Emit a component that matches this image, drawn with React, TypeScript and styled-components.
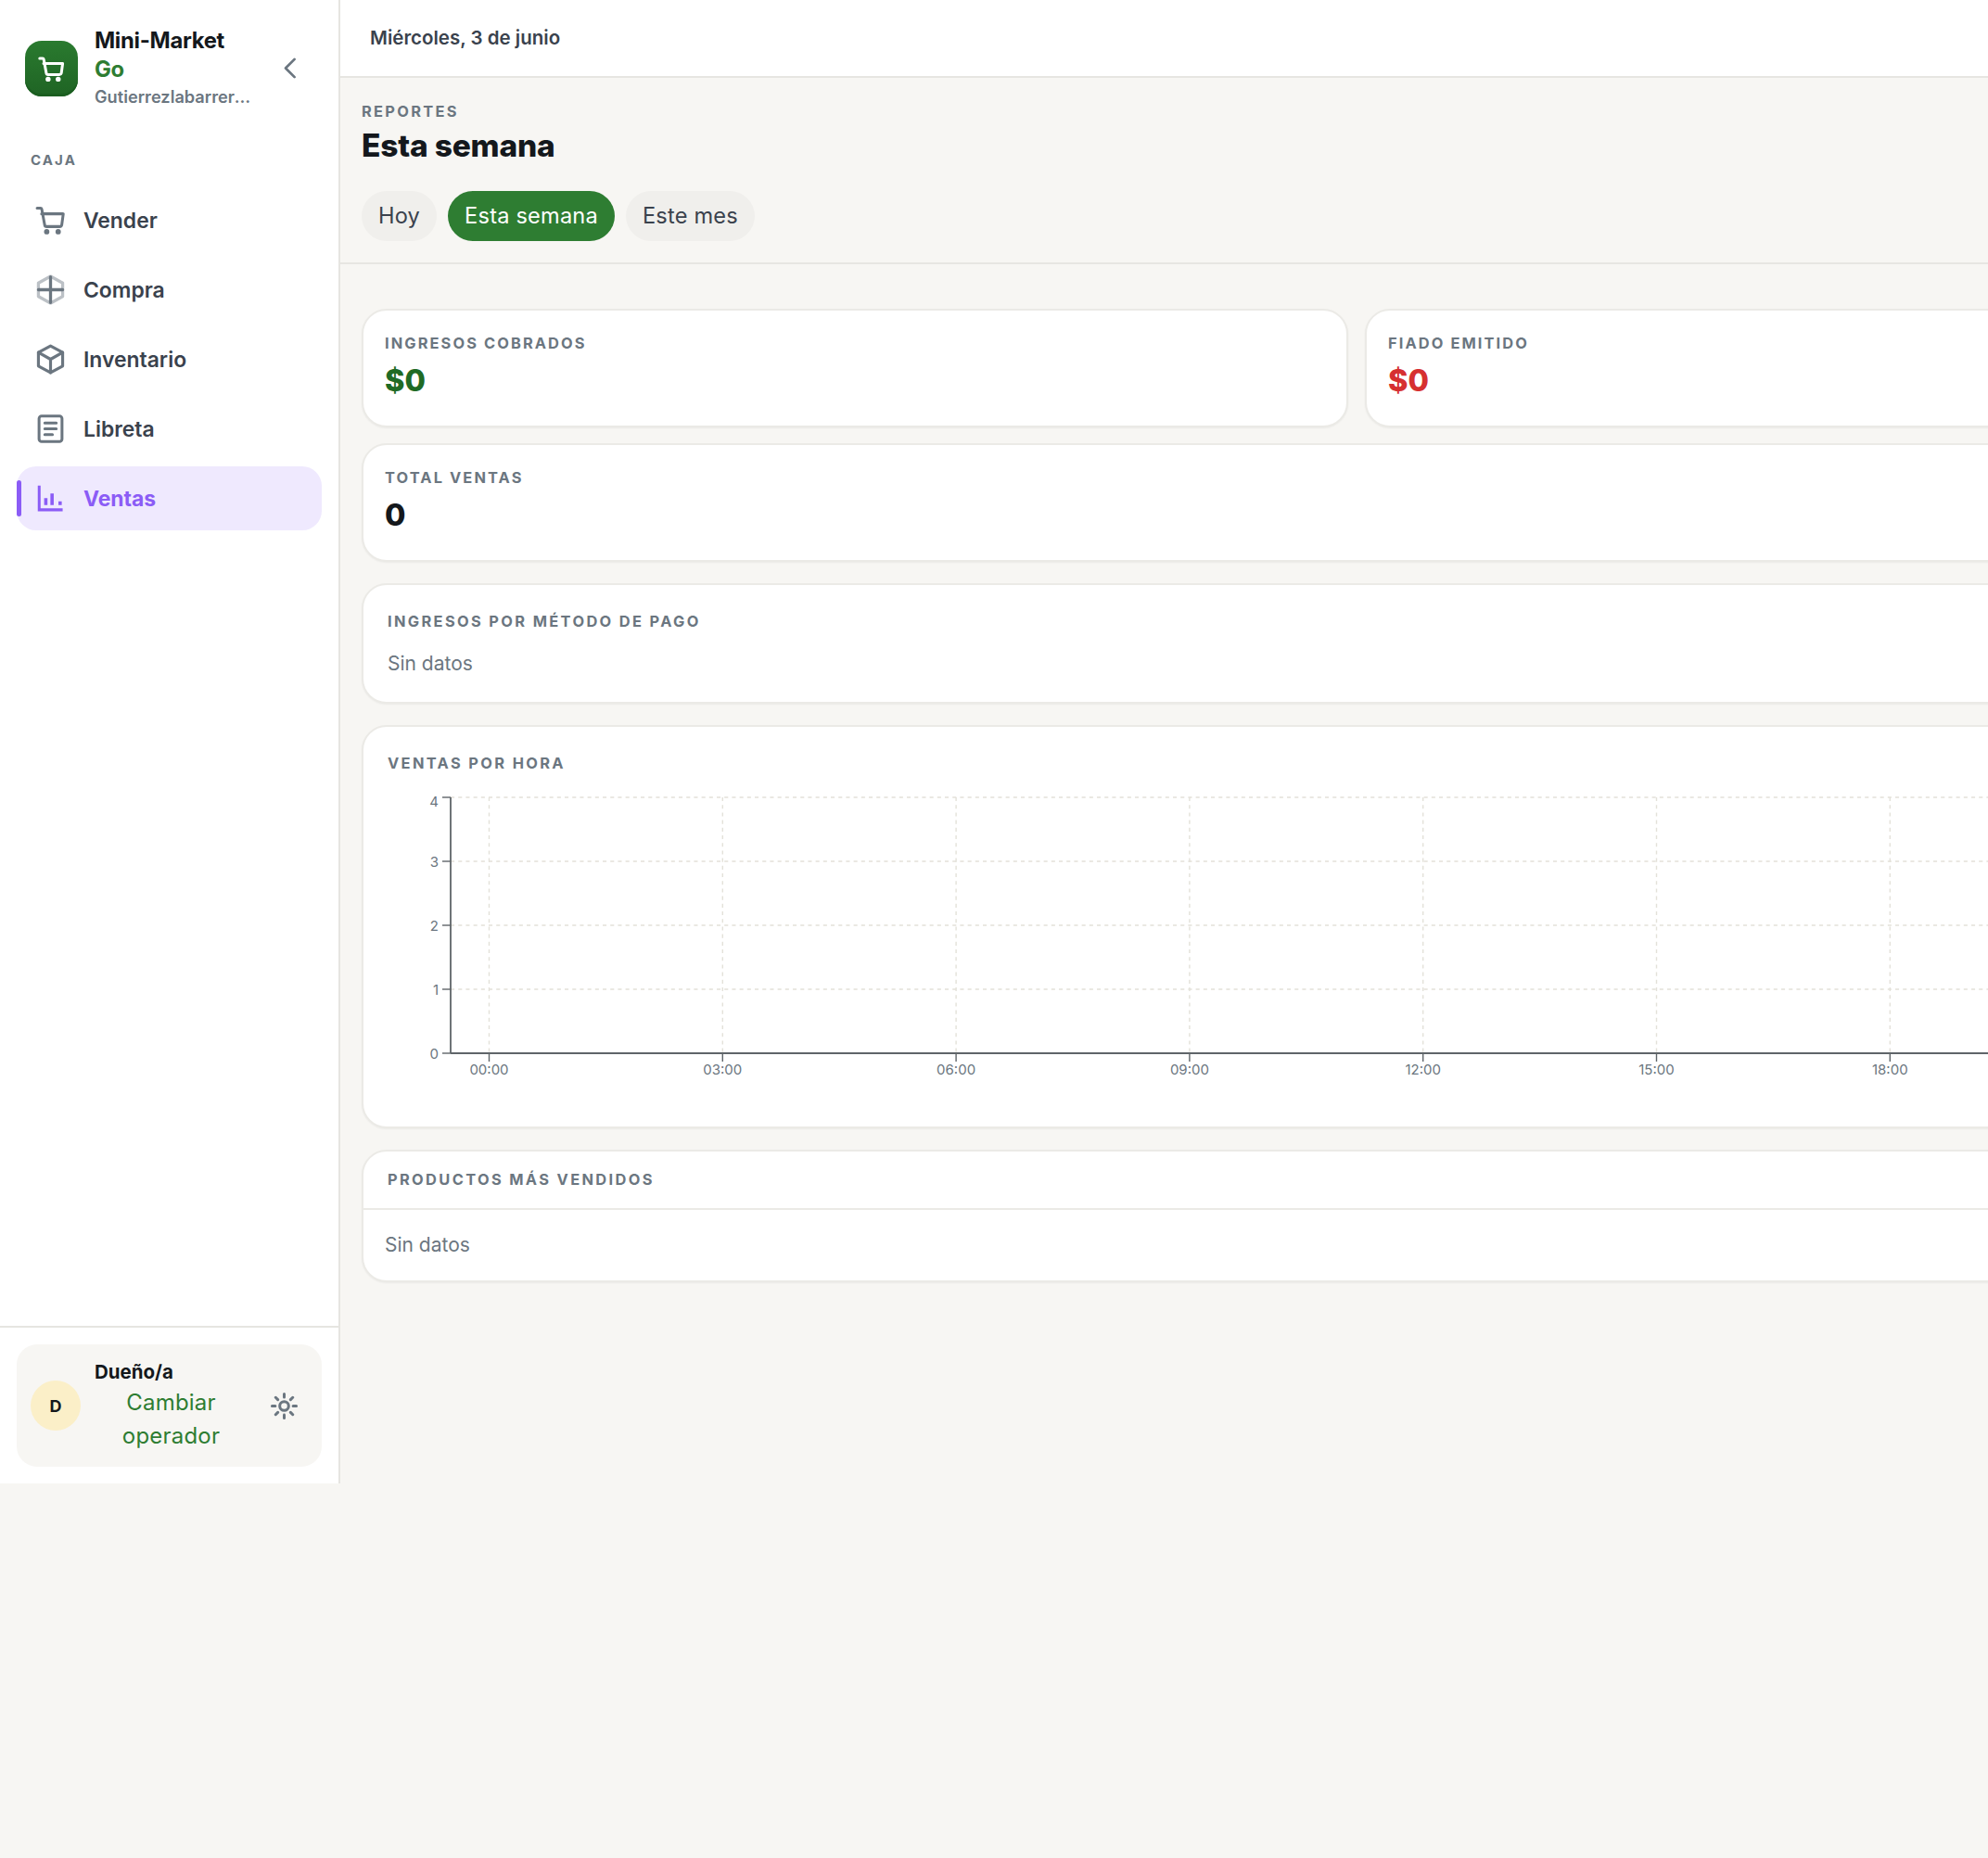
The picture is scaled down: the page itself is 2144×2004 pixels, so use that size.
import type { ReactNode } from "react";
import styled, { createGlobalStyle } from "styled-components";

const GlobalStyle = createGlobalStyle`
  html, body {
    margin: 0;
    padding: 0;
    background: #f7f6f3;
    font-family: Inter, "Noto Sans", sans-serif;
    overflow: hidden;
  }
  * {
    box-sizing: border-box;
  }
`;

const Shell = styled.div`
  display: flex;
  width: 2144px;
  height: 1600px;
`;

const Sidebar = styled.aside`
  width: 367px;
  flex: none;
  display: flex;
  flex-direction: column;
  background: #fff;
  border-right: 2px solid #e6e5e1;
`;

const Brand = styled.div`
  display: flex;
  align-items: center;
  height: 148px;
  padding: 0 0 0 27px;
`;

const Logo = styled.div`
  width: 57px;
  height: 60px;
  flex: none;
  display: flex;
  align-items: center;
  justify-content: center;
  border-radius: 18px;
  background: linear-gradient(180deg, #2a7a2f 0%, #1f6424 100%);
  box-shadow: inset 0 -3px 0 #1b5e20;
  color: #fff;
`;

const BrandText = styled.div`
  margin: -2px 0 0 18px;
  width: 172px;
`;

const BrandName = styled.div`
  font-size: 23.8px;
  line-height: 30.500px;
  font-weight: 700;
  letter-spacing: -0.3px;
  color: #14181c;
`;

const BrandGo = styled(BrandName)`
  color: #2e7d32;
`;

const BrandShop = styled.div`
  margin-top: 1px;
  font-size: 18.2px;
  line-height: 26px;
  font-weight: 600;
  color: #6b7680;
  white-space: nowrap;
  overflow: hidden;
  text-overflow: ellipsis;
`;

const Collapse = styled.button`
  border: none;
  background: none;
  padding: 0;
  margin: -2px 0 0 23px;
  display: flex;
  color: #6b7680;
`;

const NavLabel = styled.div`
  padding: 16px 0 0 33px;
  font-size: 15px;
  line-height: 18px;
  font-weight: 700;
  letter-spacing: 2.1px;
  color: #6b7680;
`;

const Nav = styled.nav`
  display: flex;
  flex-direction: column;
  gap: 6px;
  padding: 21px 18px 0;
`;

const NavItem = styled.a<{ $active?: boolean }>`
  position: relative;
  display: flex;
  align-items: center;
  gap: 19px;
  height: 69px;
  padding-left: 20px;
  border-radius: 21px;
  font-size: 22.9px;
  font-weight: ${({ $active }) => ($active ? 700 : 600)};
  color: ${({ $active }) => ($active ? "#8b5cf6" : "#3a424d")};
  background: ${({ $active }) => ($active ? "#efe9fe" : "transparent")};

  svg {
    color: ${({ $active }) => ($active ? "#8b5cf6" : "#6b7680")};
  }
`;

const ActiveMark = styled.span`
  position: absolute;
  left: 0;
  top: 15px;
  width: 5px;
  height: 39px;
  border-radius: 3px;
  background: #8b5cf6;
`;

const SidebarFoot = styled.div`
  margin-top: auto;
  padding: 18px 18px;
  border-top: 2px solid #e6e5e1;
`;

const OperatorBox = styled.div`
  display: flex;
  align-items: center;
  height: 132px;
  padding: 0 15px;
  border-radius: 22px;
  background: #f7f6f3;
`;

const Avatar = styled.div`
  width: 54px;
  height: 54px;
  flex: none;
  display: flex;
  align-items: center;
  justify-content: center;
  border-radius: 50%;
  background: #fbefc8;
  font-size: 18px;
  font-weight: 700;
  color: #14181c;
`;

const OperatorText = styled.div`
  margin-left: 15px;
  width: 165px;
`;

const OperatorName = styled.div`
  margin-top: 2px;
  font-size: 20.5px;
  line-height: 26px;
  font-weight: 700;
  color: #14181c;
`;

const SwitchOperator = styled.button`
  display: block;
  width: 100%;
  margin-top: 2px;
  border: none;
  background: none;
  padding: 0;
  font-family: inherit;
  font-size: 24px;
  line-height: 36px;
  letter-spacing: 0.2px;
  text-align: center;
  color: #2e7d32;
`;

const ThemeToggle = styled.button`
  border: none;
  background: none;
  padding: 0;
  margin-left: 23px;
  display: flex;
  color: #6b7680;
`;

const Main = styled.main`
  flex: 1;
  min-width: 0;
  overflow: hidden;
`;

const TopBar = styled.header`
  display: flex;
  align-items: center;
  height: 84px;
  padding: 0 0 1px 32px;
  background: #fff;
  border-bottom: 2px solid #e6e5e1;
  font-size: 20.5px;
  font-weight: 600;
  color: #3a424d;
`;

const PageHead = styled.section`
  height: 201px;
  padding: 26px 0 0 23px;
  border-bottom: 2px solid #e7e6e2;
`;

const Eyebrow = styled.div`
  font-size: 16.4px;
  line-height: 20px;
  font-weight: 700;
  letter-spacing: 2.3px;
  color: #6b7680;
`;

const PageTitle = styled.h1`
  margin: 5px 0 0;
  font-size: 33.5px;
  line-height: 44px;
  font-weight: 800;
  letter-spacing: -0.2px;
  color: #14181c;
`;

const Pills = styled.div`
  display: flex;
  gap: 12px;
  margin-top: 27px;
`;

const Pill = styled.button<{ $active?: boolean }>`
  height: 54px;
  padding: 0 18px 2px;
  border: none;
  border-radius: 27px;
  font-family: inherit;
  font-size: 23.6px;
  letter-spacing: 0.2px;
  color: ${({ $active }) => ($active ? "#fff" : "#3a424d")};
  background: ${({ $active }) => ($active ? "#2e7d32" : "#f0efec")};
`;

const Content = styled.div`
  display: flex;
  flex-direction: column;
  gap: 23px;
  width: 2146px;
  margin-left: 23px;
  padding-top: 48px;
`;

const StatGrid = styled.div`
  display: grid;
  grid-template-columns: 1064px 1064px;
  gap: 17px 18px;
`;

const Card = styled.div`
  background: #fff;
  border: 2px solid #ebeae6;
  border-radius: 27px;
  box-shadow: 0 1px 2px rgba(20, 24, 28, 0.05);
`;

const StatCard = styled(Card)<{ $wide?: boolean }>`
  height: 128px;
  padding: 25px 23px 0;
  ${({ $wide }) => ($wide ? "grid-column: 1 / span 2;" : "")}
`;

const SmallTitle = styled.div`
  font-size: 16.4px;
  line-height: 20px;
  font-weight: 700;
  letter-spacing: 2.1px;
  color: #6b7680;
`;

const PanelTitle = styled(SmallTitle)`
  letter-spacing: 2.36px;
`;

const StatValue = styled.div<{ $tone: string }>`
  margin-top: 10px;
  font-size: 32.5px;
  line-height: 42px;
  font-weight: 800;
  color: ${({ $tone }) => $tone};
`;

const PanelCard = styled(Card)`
  padding: 29px 26px 0;
`;

const EmptyText = styled.div`
  font-size: 21px;
  line-height: 32px;
  color: #6b7680;
`;

const MethodCard = styled(PanelCard)`
  height: 130px;

  ${EmptyText} {
    margin-top: 20px;
  }
`;

const ChartCard = styled(PanelCard)`
  height: 435px;
`;

const ChartSvg = styled.svg`
  display: block;
  margin-top: 12px;
  font-family: Inter, sans-serif;
  font-size: 15px;
`;

const ListCard = styled(Card)``;

const ListHead = styled.div`
  height: 63px;
  padding: 20px 26px 0;
  border-bottom: 2px solid #ebeae6;
`;

const ListEmpty = styled(EmptyText)`
  padding: 22px 23px 22px;
`;

const Icon = ({
  children,
  size = 33,
  weight = 2,
}: {
  children: ReactNode;
  size?: number;
  weight?: number;
}) => (
  <svg
    width={size}
    height={size}
    viewBox="0 0 24 24"
    fill="none"
    stroke="currentColor"
    strokeWidth={weight}
    strokeLinecap="round"
    strokeLinejoin="round"
  >
    {children}
  </svg>
);

const CartPath = () => (
  <>
    <path d="M1.5 2.500h2.600c.5 0 .9.3 1 .8L7.400 15.600c.1.8.8 1.400 1.600 1.400h10.200c.8 0 1.400-.5 1.600-1.300L22 7H5" />
    <circle cx="9" cy="21" r="1" fill="currentColor" />
    <circle cx="18" cy="21" r="1" fill="currentColor" />
  </>
);

const CompraIcon = () => (
  <Icon weight={2.4}>
    <path d="M12 1.500l9.500 5.200v10.600L12 22.500l-9.500-5.200V6.700z" opacity="0.45" />
    <path d="M12 2v20M2.500 12h19" />
  </Icon>
);

const BoxIcon = () => (
  <Icon weight={2.3}>
    <path d="M12 1.500l9.500 5.200v10.600L12 22.500l-9.500-5.200V6.700z" />
    <path d="M2.500 6.700L12 12l9.500-5.300M12 12v10.500" />
  </Icon>
);

const NotebookIcon = () => (
  <Icon weight={2.2}>
    <rect x="3" y="2" width="18" height="20" rx="2" />
    <path d="M7.500 7.500h9M7.500 12h9M7.500 16.500h6" />
  </Icon>
);

const ChartIcon = () => (
  <Icon weight={2.2}>
    <path d="M3.100 2V21h18.400" strokeLinecap="butt" strokeLinejoin="miter" />
    <path d="M8.300 17.200v-5.400M13.200 17.200v-9M19.500 17.200v-2.900" strokeWidth="2.600" strokeLinecap="butt" />
  </Icon>
);

const SunIcon = () => (
  <Icon weight={2.2}>
    <circle cx="12" cy="12" r="3.500" />
    <path d="M12 2.500v2.500M12 19v2.500M2.500 12H5M19 12h2.500M5.300 5.300l1.700 1.700M17 17l1.700 1.700M5.300 18.700L7 17M17 7l1.700-1.700" />
  </Icon>
);

const xTicks = ["00:00", "03:00", "06:00", "09:00", "12:00", "15:00", "18:00"];
const yTicks = [0, 1, 2, 3, 4];
const chartLeft = 68;
const chartTop = 15;
const chartBottom = 291;
const chartWidth = 2080;
const gridColor = "#e3e1d9";
const axisColor = "#5f6569";

const HourChart = () => (
  <ChartSvg width={chartWidth} height={330}>
    {yTicks.map((v) => {
      const y = chartBottom - (v * (chartBottom - chartTop)) / 4;
      return (
        <g key={v}>
          {v > 0 && (
            <line
              x1={chartLeft}
              x2={chartWidth}
              y1={y}
              y2={y}
              stroke={gridColor}
              strokeWidth="1.400"
              strokeDasharray="4.100 4.100"
            />
          )}
          <line x1={chartLeft - 9} x2={chartLeft} y1={y} y2={y} stroke={axisColor} strokeWidth="1.400" />
          <text x={chartLeft - 13} y={v === 4 ? y + 10 : y + 6} textAnchor="end" fill="#6b7680">
            {v}
          </text>
        </g>
      );
    })}
    {xTicks.map((t, i) => {
      const x = 109.5 + i * 251.8;
      return (
        <g key={t}>
          <line
            x1={x}
            x2={x}
            y1={chartTop}
            y2={chartBottom}
            stroke={gridColor}
            strokeWidth="1.400"
            strokeDasharray="4.100 4.100"
          />
          <line x1={x} x2={x} y1={chartBottom} y2={chartBottom + 9} stroke={axisColor} strokeWidth="1.400" />
          <text x={x} y={chartBottom + 23} textAnchor="middle" fill="#6b7680">
            {t}
          </text>
        </g>
      );
    })}
    <line x1={chartLeft} x2={chartLeft} y1={chartTop} y2={chartBottom} stroke={axisColor} strokeWidth="1.800" />
    <line x1={chartLeft} x2={chartWidth} y1={chartBottom} y2={chartBottom} stroke={axisColor} strokeWidth="1.800" />
  </ChartSvg>
);

const App = () => {
  return (
    <Shell>
      <GlobalStyle />
      <Sidebar>
        <Brand>
          <Logo>
            <Icon size={29} weight={2.500}>
              <CartPath />
            </Icon>
          </Logo>
          <BrandText>
            <BrandName>Mini-Market</BrandName>
            <BrandGo>Go</BrandGo>
            <BrandShop>Gutierrezlabarrera Market</BrandShop>
          </BrandText>
          <Collapse>
            <Icon>
              <path d="M15 5l-7 7 7 7" />
            </Icon>
          </Collapse>
        </Brand>
        <NavLabel>CAJA</NavLabel>
        <Nav>
          <NavItem>
            <Icon weight={2.2}>
              <CartPath />
            </Icon>
            Vender
          </NavItem>
          <NavItem>
            <CompraIcon />
            Compra
          </NavItem>
          <NavItem>
            <BoxIcon />
            Inventario
          </NavItem>
          <NavItem>
            <NotebookIcon />
            Libreta
          </NavItem>
          <NavItem $active>
            <ActiveMark />
            <ChartIcon />
            Ventas
          </NavItem>
        </Nav>
        <SidebarFoot>
          <OperatorBox>
            <Avatar>D</Avatar>
            <OperatorText>
              <OperatorName>Dueño/a</OperatorName>
              <SwitchOperator>Cambiar operador</SwitchOperator>
            </OperatorText>
            <ThemeToggle>
              <SunIcon />
            </ThemeToggle>
          </OperatorBox>
        </SidebarFoot>
      </Sidebar>
      <Main>
        <TopBar>Miércoles, 3 de junio</TopBar>
        <PageHead>
          <Eyebrow>REPORTES</Eyebrow>
          <PageTitle>Esta semana</PageTitle>
          <Pills>
            <Pill>Hoy</Pill>
            <Pill $active>Esta semana</Pill>
            <Pill>Este mes</Pill>
          </Pills>
        </PageHead>
        <Content>
          <StatGrid>
            <StatCard>
              <SmallTitle>INGRESOS COBRADOS</SmallTitle>
              <StatValue $tone="#1f6b25">$0</StatValue>
            </StatCard>
            <StatCard>
              <SmallTitle>FIADO EMITIDO</SmallTitle>
              <StatValue $tone="#d63031">$0</StatValue>
            </StatCard>
            <StatCard $wide>
              <SmallTitle>TOTAL VENTAS</SmallTitle>
              <StatValue $tone="#14181c">0</StatValue>
            </StatCard>
          </StatGrid>
          <MethodCard>
            <PanelTitle>INGRESOS POR MÉTODO DE PAGO</PanelTitle>
            <EmptyText>Sin datos</EmptyText>
          </MethodCard>
          <ChartCard>
            <PanelTitle>VENTAS POR HORA</PanelTitle>
            <HourChart />
          </ChartCard>
          <ListCard>
            <ListHead>
              <PanelTitle>PRODUCTOS MÁS VENDIDOS</PanelTitle>
            </ListHead>
            <ListEmpty>Sin datos</ListEmpty>
          </ListCard>
        </Content>
      </Main>
    </Shell>
  );
};

export default App;
